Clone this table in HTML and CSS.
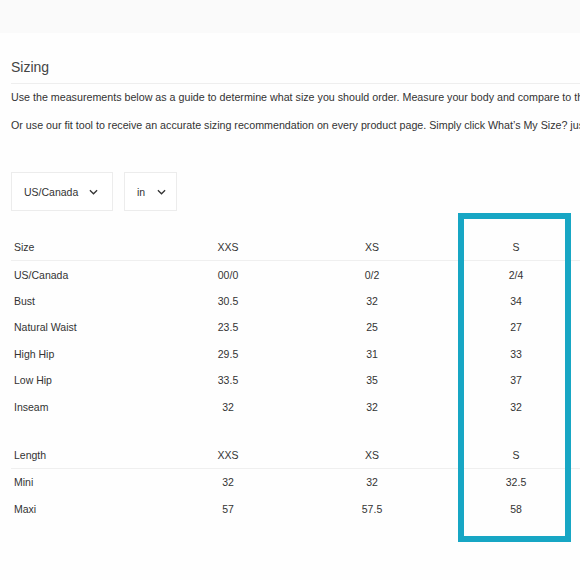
FILE: index.html
```html
<!DOCTYPE html>
<html>
<head>
<meta charset="utf-8">
<link rel="stylesheet" href="styles.css">
</head>
<body>
<div class="topband"></div>
<main class="page">
  <h2 class="title">Sizing</h2>
  <p class="intro first">Use the measurements below as a guide to determine what size you should order. Measure your body and compare to the chart below.</p>
  <p class="intro">Or use our fit tool to receive an accurate sizing recommendation on every product page. Simply click What’s My Size? just below the size selector.</p>
  <div class="selects">
    <div class="select wide">US/Canada <svg class="chev" viewBox="0 0 10 6" width="9" height="6"><path d="M1 1 L5 5 L9 1" fill="none" stroke="#333" stroke-width="1.4"/></svg></div>
    <div class="select narrow">in <svg class="chev" viewBox="0 0 10 6" width="9" height="6"><path d="M1 1 L5 5 L9 1" fill="none" stroke="#333" stroke-width="1.4"/></svg></div>
  </div>
  <table class="chart">
    <thead><tr><th>Size</th><th>XXS</th><th>XS</th><th>S</th></tr></thead>
    <tbody>
      <tr><td>US/Canada</td><td>00/0</td><td>0/2</td><td>2/4</td></tr>
      <tr><td>Bust</td><td>30.5</td><td>32</td><td>34</td></tr>
      <tr><td>Natural Waist</td><td>23.5</td><td>25</td><td>27</td></tr>
      <tr><td>High Hip</td><td>29.5</td><td>31</td><td>33</td></tr>
      <tr><td>Low Hip</td><td>33.5</td><td>35</td><td>37</td></tr>
      <tr><td>Inseam</td><td>32</td><td>32</td><td>32</td></tr>
    </tbody>
  </table>
  <table class="chart second">
    <thead><tr><th>Length</th><th>XXS</th><th>XS</th><th>S</th></tr></thead>
    <tbody>
      <tr><td>Mini</td><td>32</td><td>32</td><td>32.5</td></tr>
      <tr><td>Maxi</td><td>57</td><td>57.5</td><td>58</td></tr>
    </tbody>
  </table>
</main>
<div class="highlight"></div>
</body>
</html>
```
FILE: styles.css
```css
html, body {
  margin: 0;
  padding: 0;
  background: #fefefe;
  width: 580px;
  height: 580px;
  overflow: hidden;
  font-family: "Liberation Sans", Arial, sans-serif;
  color: #333;
}
.topband {
  height: 33px;
  background: #fafafa;
}
.page {
  padding-left: 11px;
  width: 600px;
}
.title {
  margin: 24px 0 0 0;
  font-size: 14px;
  line-height: 20px;
  font-weight: normal;
  color: #444;
  padding-bottom: 6px;
  border-bottom: 1px solid #eeeeee;
}
.intro {
  margin: 14px 0 0 0;
  font-size: 10.7px;
  line-height: 14px;
  white-space: nowrap;
  color: #333;
}
.intro.first {
  margin-top: 6px;
}
.selects {
  display: flex;
  gap: 11px;
  margin-top: 40px;
}
.select {
  box-sizing: border-box;
  height: 39px;
  border: 1px solid #ececec;
  display: flex;
  align-items: center;
  font-size: 10.5px;
  color: #333;
  background: #fff;
}
.select.wide {
  width: 102px;
  padding-left: 12px;
  gap: 11px;
}
.select.narrow {
  width: 53px;
  padding-left: 12px;
  gap: 12px;
}
.chev {
  display: block;
}
.chart {
  border-collapse: collapse;
  width: 577px;
  table-layout: fixed;
  margin-top: 23px;
  font-size: 10.5px;
  color: #333;
}
.chart.second {
  margin-top: 22px;
}
.chart th, .chart td {
  height: 26.4px;
  padding: 0;
  font-weight: normal;
  text-align: center;
  vertical-align: middle;
}
.chart th:first-child, .chart td:first-child {
  text-align: left;
  padding-left: 3px;
  width: 142px;
}
.chart thead th {
  border-bottom: 1px solid #efefef;
}
.highlight {
  position: absolute;
  left: 458px;
  top: 213px;
  width: 101px;
  height: 317px;
  border: 6px solid #17a6c4;
}
```
